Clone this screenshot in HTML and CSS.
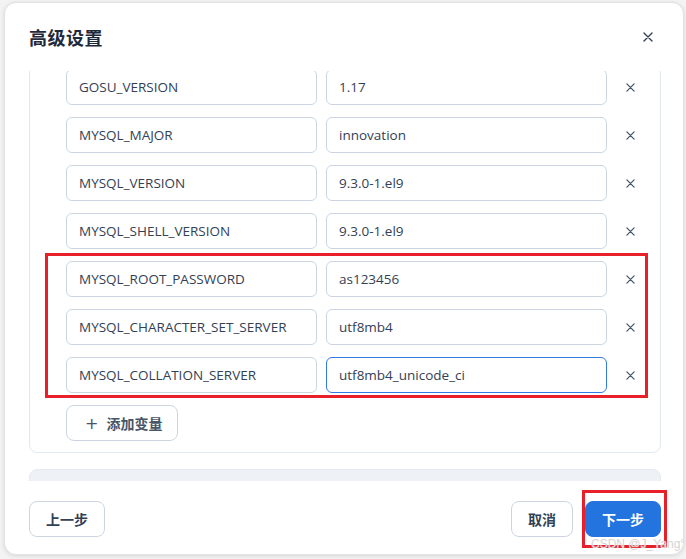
FILE: index.html
```html
<!DOCTYPE html>
<html lang="zh-CN">
<head>
<meta charset="utf-8">
<title>高级设置</title>
<link rel="stylesheet" href="styles.css">
</head>
<body>
<div class="dialog">
  <div class="header">
    <h2 class="title">高级设置</h2>
    <button class="close" aria-label="关闭">
      <svg width="10" height="10" viewBox="0 0 10 10"><path d="M1 1L9 9M9 1L1 9" stroke="#334155" stroke-width="1.4" stroke-linecap="round"/></svg>
    </button>
  </div>
  <div class="body">
    <div class="card">
      <div class="rows">
        <div class="row"><div class="input">GOSU_VERSION</div><div class="input">1.17</div><button class="remove"><svg width="9" height="9" viewBox="0 0 10 10"><path d="M1 1L9 9M9 1L1 9" stroke="#475569" stroke-width="1.4" stroke-linecap="round"/></svg></button></div>
        <div class="row"><div class="input">MYSQL_MAJOR</div><div class="input">innovation</div><button class="remove"><svg width="9" height="9" viewBox="0 0 10 10"><path d="M1 1L9 9M9 1L1 9" stroke="#475569" stroke-width="1.4" stroke-linecap="round"/></svg></button></div>
        <div class="row"><div class="input">MYSQL_VERSION</div><div class="input">9.3.0-1.el9</div><button class="remove"><svg width="9" height="9" viewBox="0 0 10 10"><path d="M1 1L9 9M9 1L1 9" stroke="#475569" stroke-width="1.4" stroke-linecap="round"/></svg></button></div>
        <div class="row"><div class="input">MYSQL_SHELL_VERSION</div><div class="input">9.3.0-1.el9</div><button class="remove"><svg width="9" height="9" viewBox="0 0 10 10"><path d="M1 1L9 9M9 1L1 9" stroke="#475569" stroke-width="1.4" stroke-linecap="round"/></svg></button></div>
        <div class="row"><div class="input">MYSQL_ROOT_PASSWORD</div><div class="input">as123456</div><button class="remove"><svg width="9" height="9" viewBox="0 0 10 10"><path d="M1 1L9 9M9 1L1 9" stroke="#475569" stroke-width="1.4" stroke-linecap="round"/></svg></button></div>
        <div class="row"><div class="input">MYSQL_CHARACTER_SET_SERVER</div><div class="input">utf8mb4</div><button class="remove"><svg width="9" height="9" viewBox="0 0 10 10"><path d="M1 1L9 9M9 1L1 9" stroke="#475569" stroke-width="1.4" stroke-linecap="round"/></svg></button></div>
        <div class="row"><div class="input">MYSQL_COLLATION_SERVER</div><div class="input focused">utf8mb4_unicode_ci</div><button class="remove"><svg width="9" height="9" viewBox="0 0 10 10"><path d="M1 1L9 9M9 1L1 9" stroke="#475569" stroke-width="1.4" stroke-linecap="round"/></svg></button></div>
      </div>
      <button class="add"><span class="plus">+</span>添加变量</button>
    </div>
    <div class="card2"></div>
  </div>
  <div class="footer">
    <button class="btn">上一步</button>
    <div class="right">
      <button class="btn">取消</button>
      <button class="btn primary">下一步</button>
    </div>
  </div>
</div>
<div class="mark mark-rows"></div>
<div class="mark mark-next"></div>
<div class="watermark">CSDN @J_Yang°</div>
</body>
</html>
```

FILE: styles.css
```css
* { box-sizing: border-box; }
html, body { margin: 0; padding: 0; }
body {
  width: 686px;
  height: 559px;
  background: #f3f3f3;
  font-family: "Noto Sans CJK SC", "Noto Sans", sans-serif;
  position: relative;
  overflow: hidden;
  padding: 2px 2px 0 4px;
}
.dialog {
  width: 680px;
  height: 553px;
  background: #fff;
  border: 1px solid #e3e3e3;
  border-radius: 12px;
  box-shadow: 0 1px 4px rgba(0,0,0,0.12);
  display: flex;
  flex-direction: column;
  overflow: hidden;
}
.header {
  height: 68px;
  flex: none;
  display: flex;
  align-items: center;
  justify-content: space-between;
  padding: 0 28px 0 24px;
}
.title {
  margin: 0;
  font-size: 18px;
  font-weight: 700;
  color: #1e293b;
  letter-spacing: 0.5px;
}
.close {
  border: 0;
  background: none;
  padding: 0;
  width: 14px;
  height: 14px;
  display: flex;
  align-items: center;
  justify-content: center;
}
.body {
  height: 410px;
  flex: none;
  overflow: hidden;
  padding: 0 22px 0 24px;
}
.card {
  margin-top: -15px;
  border: 1px solid #e2e8f0;
  border-radius: 8px;
  padding: 12px 10px 11px 36px;
}
.rows {
  display: flex;
  flex-direction: column;
  gap: 12px;
}
.row {
  display: flex;
  align-items: center;
  height: 36px;
}
.input {
  flex: none;
  height: 36px;
  border: 1px solid #cbd5e1;
  border-radius: 6px;
  padding: 0 12px;
  display: flex;
  align-items: center;
  font-family: "Open Sans", "Noto Sans CJK SC", sans-serif;
  font-size: 13.5px;
  color: #334155;
  white-space: nowrap;
}
.row .input:first-child { width: 251px; margin-right: 9px; }
.row .input:nth-child(2) { width: 281px; }
.input.focused { border-color: #2f7be6; }
.remove {
  flex: none;
  width: 40px;
  height: 36px;
  margin-left: 3px;
  border: 0;
  background: none;
  padding: 0;
  display: flex;
  align-items: center;
  justify-content: center;
}
.add {
  margin-top: 12px;
  height: 36px;
  padding: 0 15px 0 18px;
  border: 1px solid #cbd5e1;
  border-radius: 8px;
  background: #fff;
  font-family: "Noto Sans CJK SC", sans-serif;
  font-size: 14px;
  font-weight: 700;
  color: #475569;
  display: flex;
  align-items: center;
}
.plus {
  font-family: "DejaVu Sans", sans-serif;
  font-weight: 400;
  font-size: 16px;
  margin-right: 8px;
}
.card2 {
  margin-top: 16px;
  height: 60px;
  background: #eef2f7;
  border: 1px solid #e5eaf1;
  border-radius: 8px;
}
.footer {
  flex: 1;
  display: flex;
  justify-content: space-between;
  align-items: flex-start;
  padding: 20px 22px 0 24px;
}
.right { display: flex; gap: 12px; }
.btn {
  height: 36px;
  padding: 0 16px;
  border: 1px solid #cbd5e1;
  border-radius: 8px;
  background: #fff;
  font-family: "Noto Sans CJK SC", sans-serif;
  font-size: 14px;
  font-weight: 700;
  color: #334155;
}
.btn.primary {
  background: #2474e0;
  border-color: #2474e0;
  color: #fff;
  padding: 0 16px;
}
.mark {
  position: absolute;
  border: 3px solid #e8202a;
}
.mark-rows { left: 45px; top: 253px; width: 603px; height: 145px; }
.mark-next { left: 582px; top: 490px; width: 85px; height: 58px; }
.watermark {
  position: absolute;
  left: 591px;
  top: 537px;
  font-family: "Liberation Sans", sans-serif;
  font-size: 12px;
  color: #d4d4d4;
  text-shadow: 0 0 1px #fff;
}
```
